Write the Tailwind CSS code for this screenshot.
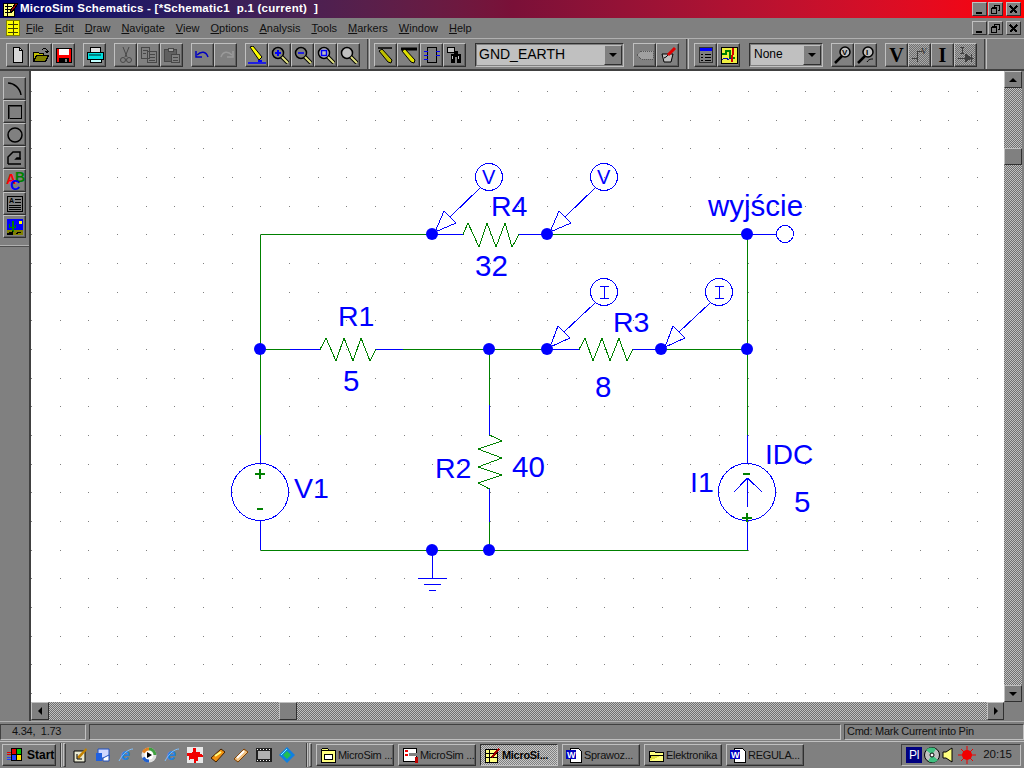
<!DOCTYPE html>
<html lang="en">
<head>
  <meta charset="UTF-8" />
  <title>MicroSim Schematics</title>
  <script src="https://cdn.jsdelivr.net/npm/@tailwindcss/browser@4"></script>
</head>
<body class="w-[1024px] h-[768px] overflow-hidden bg-[#808080] text-black text-[11px] leading-none font-['Liberation_Sans',Arial,sans-serif]">

  <!-- Title bar -->
  <div class="h-[18px] flex items-center bg-linear-to-r from-[#000070] via-[#7a1038] to-[#ff0000]">
    <svg class="ml-[2px] w-[16px] h-[16px]" viewBox="0 0 16 16" shape-rendering="crispEdges"><path d="M1 2h11v13H1z" fill="#ffff80" stroke="#000"/><path d="M3 5h7M3 8h7M3 11h7M5 2v13" stroke="#000"/><path d="M8 10l6-8 2 1-6 8z" fill="#a00000" stroke="#000"/></svg>
    <span class="ml-[2px] text-white font-bold text-[11.5px] tracking-[0.25px] whitespace-pre">MicroSim Schematics - [*Schematic1  p.1 (current)  ]</span>
    <div class="ml-auto mr-[3px] flex items-center [&>div]:w-[15px] [&>div]:h-[14px] [&>div]:bg-[#808080] [&>div]:border [&>div]:border-t-[#c0c0c0] [&>div]:border-l-[#c0c0c0] [&>div]:border-r-[#303030] [&>div]:border-b-[#303030] [&>div]:flex [&>div]:items-center [&>div]:justify-center">
      <div><svg class="w-[9px] h-[9px]" viewBox="0 0 9 9" shape-rendering="crispEdges"><path d="M1 7h6v2H1z"/></svg></div>
      <div class="ml-px"><svg class="w-[9px] h-[9px]" viewBox="0 0 9 9" shape-rendering="crispEdges"><path d="M3 .5h5.500v5H7M3 .5V2M.5 3.500h5v5h-5zM.5 2.500h5" fill="none" stroke="#000"/></svg></div>
      <div class="ml-[3px]"><svg class="w-[9px] h-[9px]" viewBox="0 0 9 9" shape-rendering="crispEdges"><path d="M1 1l7 7M8 1l-7 7" stroke="#000" stroke-width="1.500"/></svg></div>
    </div>
  </div>

  <!-- Menu bar -->
  <div class="h-[20px] flex items-center">
    <svg class="ml-[6px] w-[14px] h-[16px]" viewBox="0 0 14 16" shape-rendering="crispEdges"><path d="M.5 .5h13v15H.5z" fill="#ffff00" stroke="#808000"/><path d="M2 4h10M2 8h10M2 12h10M7 1v14" stroke="#404000"/></svg>
    <div class="ml-[6px] flex gap-[11px] text-[11px] text-[#101010] [&_u]:underline-offset-1">
      <span><u>F</u>ile</span><span><u>E</u>dit</span><span><u>D</u>raw</span><span><u>N</u>avigate</span><span><u>V</u>iew</span><span><u>O</u>ptions</span><span><u>A</u>nalysis</span><span><u>T</u>ools</span><span><u>M</u>arkers</span><span><u>W</u>indow</span><span><u>H</u>elp</span>
    </div>
    <div class="ml-auto mr-[3px] flex items-center [&>div]:w-[15px] [&>div]:h-[14px] [&>div]:bg-[#808080] [&>div]:border [&>div]:border-t-[#c0c0c0] [&>div]:border-l-[#c0c0c0] [&>div]:border-r-[#303030] [&>div]:border-b-[#303030] [&>div]:flex [&>div]:items-center [&>div]:justify-center">
      <div><svg class="w-[9px] h-[9px]" viewBox="0 0 9 9" shape-rendering="crispEdges"><path d="M1 7h6v2H1z"/></svg></div>
      <div class="ml-px"><svg class="w-[9px] h-[9px]" viewBox="0 0 9 9" shape-rendering="crispEdges"><path d="M3 .5h5.500v5H7M3 .5V2M.5 3.500h5v5h-5zM.5 2.500h5" fill="none" stroke="#000"/></svg></div>
      <div class="ml-[3px]"><svg class="w-[9px] h-[9px]" viewBox="0 0 9 9" shape-rendering="crispEdges"><path d="M1 1l7 7M8 1l-7 7" stroke="#000" stroke-width="1.500"/></svg></div>
    </div>
  </div>

  <!-- Main toolbar -->
  <div class="h-[33px] pt-[4px] flex items-start border-t border-t-[#b0b0b0] border-b-2 border-b-[#404040] [&_button]:w-[23px] [&_button]:h-[24px] [&_button]:flex [&_button]:items-center [&_button]:justify-center [&_button]:border [&_button]:border-t-[#c0c0c0] [&_button]:border-l-[#c0c0c0] [&_button]:border-r-[#303030] [&_button]:border-b-[#303030] [&_button]:shadow-[inset_-1px_-1px_0_#606060] [&_svg]:w-[18px] [&_svg]:h-[18px]">
    <div class="ml-[6px] flex">
      <button><svg viewBox="0 0 18 18" shape-rendering="crispEdges"><path d="M4.500 1.500h6l3 3v12h-9z" fill="#d8d8d8" stroke="#000"/><path d="M10.500 1.500v3h3" fill="none" stroke="#000"/></svg></button>
      <button><svg viewBox="0 0 18 18" shape-rendering="crispEdges"><path d="M1.500 6.500h5l1 1h4v3h-8l-2 5z" fill="#c0c000" stroke="#000"/><path d="M1.500 15.500l3-6h12l-3 6z" fill="#808000" stroke="#000"/><path d="M10 4c1-2 3-2 5 0v2M13 5h4l-2 2z" fill="none" stroke="#000"/></svg></button>
      <button><svg viewBox="0 0 18 18" shape-rendering="crispEdges"><path d="M1 2h16v15H1z" fill="#000"/><path d="M2 3h14v13H2z" fill="#ff0000"/><path d="M4 3h10v6H4z" fill="#fff"/><path d="M4 12h10v4H4z" fill="#000"/><path d="M10 13h2v3h-2z" fill="#808080"/></svg></button>
    </div>
    <div class="ml-2 flex">
      <button><svg viewBox="0 0 18 18" shape-rendering="crispEdges"><path d="M4 1h10v5H4z" fill="#e0e0e0" stroke="#000"/><path d="M1 6h16v7H1z" fill="#00e0e0" stroke="#000"/><path d="M3 8h12v2H3z" fill="#008080"/><path d="M4 13h11v3H4z" fill="#c0ffff" stroke="#000"/></svg></button>
    </div>
    <div class="ml-2 flex">
      <button><svg viewBox="0 0 18 18" fill="none" stroke="#484848"><path d="M6 1l4 10M12 1l-4 10"/><circle cx="6" cy="14" r="2.500"/><circle cx="12" cy="14" r="2.500"/></svg></button>
      <button><svg viewBox="0 0 18 18" fill="none" stroke="#484848" shape-rendering="crispEdges"><path d="M1.500 1.500h8v11h-8zM7.500 5.500h9v11h-9z" fill="#808080"/><path d="M3 4h5M3 7h3M9 8h6M9 11h6M9 14h6"/></svg></button>
      <button><svg viewBox="0 0 18 18" fill="none" stroke="#484848" shape-rendering="crispEdges"><path d="M1.500 3.500h12v12h-12z" fill="#606060"/><path d="M5 2h5v3H5z" fill="#a0a0a0"/><path d="M8.500 8.500h8v8h-8z" fill="#808080"/><path d="M10 11h5M10 14h5"/></svg></button>
    </div>
    <div class="ml-2 flex">
      <button><svg viewBox="0 0 18 18" fill="none" stroke="#0000c0" stroke-width="1.500"><path d="M3 9c4-4 9-4 11 2"/><path d="M2 5v6h6" fill="none"/></svg></button>
      <button><svg viewBox="0 0 18 18" fill="none" stroke="#9a9a9a" stroke-width="1.500"><path d="M15 9c-4-4-9-4-11 2"/><path d="M16 5v6h-6"/></svg></button>
    </div>
    <div class="ml-2 flex">
      <button><svg viewBox="0 0 18 18"><path d="M2 1l3-1 9 11-3 3z" fill="#ffff00" stroke="#000"/><path d="M10 14h4v2h-4z" fill="#0000ff"/><path d="M0 17h18" stroke="#0000ff" stroke-width="1.500"/></svg></button>
      <button><svg viewBox="0 0 18 18" fill="none"><circle cx="7" cy="7" r="5.500" stroke="#000" stroke-width="1.500"/><path d="M4 7h6M7 4v6" stroke="#0000ff" stroke-width="2"/><path d="M11 11l6 6" stroke="#000" stroke-width="4"/><path d="M11 11l6 6" stroke="#e0e080" stroke-width="2"/></svg></button>
      <button><svg viewBox="0 0 18 18" fill="none"><circle cx="7" cy="7" r="5.500" stroke="#000" stroke-width="1.500"/><path d="M4 7h6" stroke="#0000ff" stroke-width="1.500"/><path d="M11 11l6 6" stroke="#000" stroke-width="4"/><path d="M11 11l6 6" stroke="#e0e080" stroke-width="2"/></svg></button>
      <button><svg viewBox="0 0 18 18" fill="none"><circle cx="7" cy="7" r="5.500" fill="#c0c0c0" stroke="#000" stroke-width="1.500"/><path d="M4.500 4.500h5v5h-5z" stroke="#0000ff" stroke-width="1.500"/><path d="M11 11l6 6" stroke="#000" stroke-width="4"/><path d="M11 11l6 6" stroke="#e0e080" stroke-width="2"/></svg></button>
      <button><svg viewBox="0 0 18 18" fill="none"><circle cx="7" cy="7" r="5.500" fill="#c0c0c0" stroke="#000" stroke-width="1.500"/><path d="M11 11l6 6" stroke="#000" stroke-width="4"/><path d="M11 11l6 6" stroke="#e0e080" stroke-width="2"/></svg></button>
    </div>
    <div class="ml-[7px] mr-[4px] -mt-[4px] w-[3px] h-[30px] border-l border-l-[#404040] border-r border-r-[#c0c0c0]"></div>
    <div class="flex">
      <button><svg viewBox="0 0 18 18"><path d="M1 2h14" stroke="#000" stroke-width="1.500"/><path d="M2 5l3-2 10 11-1 3-3-1z" fill="#c0c000" stroke="#000"/></svg></button>
      <button><svg viewBox="0 0 18 18"><path d="M1 3h16" stroke="#000" stroke-width="3"/><path d="M2 5l3-2 10 11-1 3-3-1z" fill="#e0e000" stroke="#000"/></svg></button>
      <button><svg viewBox="0 0 18 18" shape-rendering="crispEdges"><path d="M4.500 1.500h9v15h-9z" fill="#808080" stroke="#000"/><path d="M1 5h4M1 9h4M1 13h4M13 5h4M13 9h4" stroke="#0000ff"/></svg></button>
      <button><svg viewBox="0 0 18 18" shape-rendering="crispEdges"><path d="M1.500 1.500h7v5h-7z" fill="#c0c0c0" stroke="#000"/><path d="M5 8h4v9H5zM11 8h4v9h-4zM8 5h4v6H8z" fill="#000"/><path d="M6 10h1v3H6zM12 10h1v3h-1z" fill="#c0c0c0"/></svg></button>
    </div>
    <div class="ml-[9px] w-[149px] h-[24px] flex border border-t-[#303030] border-l-[#303030] border-r-[#c0c0c0] border-b-[#c0c0c0] p-px">
      <span class="flex-1 bg-[#c0c0c0] pl-[2px] text-[14px] leading-[19px]">GND_EARTH</span>
      <div class="w-[18px] flex items-center justify-center border border-t-[#c0c0c0] border-l-[#c0c0c0] border-r-[#303030] border-b-[#303030]"><span class="w-0 h-0 border-x-[4px] border-x-transparent border-t-[4px] border-t-black"></span></div>
    </div>
    <div class="ml-[9px] flex">
      <button><svg viewBox="0 0 18 18" shape-rendering="crispEdges"><path d="M5 5h12v8H5L1 9z" fill="#a0a0a0" stroke="#585858" stroke-dasharray="1 1"/></svg></button>
      <button><svg viewBox="0 0 18 18"><path d="M3 8h11l-2 8H5z" fill="#c0c0c0" stroke="#000"/><path d="M5 12c3-1 4-3 5-5" stroke="#000" fill="none"/><path d="M9 9l7-7" stroke="#e00000" stroke-width="3"/></svg></button>
    </div>
    <div class="ml-[7px] mr-[5px] -mt-[4px] w-[3px] h-[30px] border-l border-l-[#404040] border-r border-r-[#c0c0c0]"></div>
    <div class="flex">
      <button><svg viewBox="0 0 18 18" shape-rendering="crispEdges"><path d="M2 1h14v16H2z" fill="#303030"/><path d="M3 2h12v3H3z" fill="#0000ff"/><path d="M3 5h12v11H3z" fill="#808080"/><path d="M4 8h2M8 8h6M4 11h2M8 11h6M4 14h2M8 14h6" stroke="#000"/></svg></button>
      <button><svg viewBox="0 0 18 18" shape-rendering="crispEdges"><path d="M1 1h16v16H1z" fill="#f0f040" stroke="#000"/><path d="M2 8h4v-3h4v7h5" fill="none" stroke="#008000" stroke-width="1.500"/><path d="M2 14c4-5 6 3 10-3" fill="none" stroke="#0000c0"/><path d="M13 2l-1 14" stroke="#d00000" stroke-width="2"/></svg></button>
    </div>
    <div class="ml-[9px] w-[74px] h-[24px] flex border border-t-[#303030] border-l-[#303030] border-r-[#c0c0c0] border-b-[#c0c0c0] p-px">
      <span class="flex-1 bg-[#c0c0c0] pl-[3px] text-[12px] leading-[19px]">None</span>
      <div class="w-[18px] flex items-center justify-center border border-t-[#c0c0c0] border-l-[#c0c0c0] border-r-[#303030] border-b-[#303030]"><span class="w-0 h-0 border-x-[4px] border-x-transparent border-t-[4px] border-t-black"></span></div>
    </div>
    <div class="ml-2 flex">
      <button><svg viewBox="0 0 18 18" fill="none"><circle cx="11" cy="6" r="5" fill="#c0c0c0" stroke="#000" stroke-width="1.500"/><text x="8" y="9" class="text-[8px] font-bold" fill="#000" stroke="none">V</text><path d="M1 17l7-7" stroke="#000" stroke-width="2.500"/></svg></button>
      <button><svg viewBox="0 0 18 18" fill="none"><circle cx="11" cy="6" r="5" fill="#c0c0c0" stroke="#000" stroke-width="1.500"/><text x="9" y="9" class="text-[8px] font-bold" fill="#000" stroke="none">I</text><path d="M1 17l7-7" stroke="#000" stroke-width="2.500"/><path d="M10 16c2-3 4-3 6-3" stroke="#000"/></svg></button>
    </div>
    <div class="ml-2 flex font-['Liberation_Serif',serif] font-bold text-[20px]">
      <button>V</button>
      <button class="bg-[repeating-conic-gradient(#a8a8a8_0_25%,#707070_0_50%)] bg-[length:2px_2px]"><svg viewBox="0 0 18 18" shape-rendering="crispEdges"><path d="M1 12h5v-7h5M6 12v4" fill="none" stroke="#404040"/><text x="10" y="8" class="text-[8px]" fill="#404040">V</text></svg></button>
      <button>I</button>
      <button class="bg-[repeating-conic-gradient(#a8a8a8_0_25%,#707070_0_50%)] bg-[length:2px_2px]"><svg viewBox="0 0 18 18" shape-rendering="crispEdges"><path d="M1 12h16M8 8v8l6-4zM14 8v8" fill="#404040" stroke="#404040"/><path d="M3 1h4M5 1v6M3 7h4" stroke="#404040"/></svg></button>
    </div>
    <div class="ml-[7px] -mt-[4px] w-[3px] h-[30px] border-l border-l-[#404040] border-r border-r-[#c0c0c0]"></div>
  </div>

  <!-- Work area -->
  <div class="h-[650px] flex">
    <!-- Drawing toolbar -->
    <div class="w-[31px] border-r-2 border-r-[#404040] pl-[3px] pt-[6px] flex flex-col [&_button]:w-[23px] [&_button]:h-[23px] [&_button]:flex [&_button]:items-center [&_button]:justify-center [&_button]:border [&_button]:border-t-[#c0c0c0] [&_button]:border-l-[#c0c0c0] [&_button]:border-r-[#303030] [&_button]:border-b-[#303030] [&_button]:shadow-[inset_-1px_-1px_0_#606060] [&_svg]:w-[18px] [&_svg]:h-[18px] [&_svg]:overflow-visible">
      <button><svg viewBox="0 0 18 18" fill="none"><path d="M2 3c6 0 12 5 13 12" stroke="#000" stroke-width="1.500"/></svg></button>
      <button><svg viewBox="0 0 18 18" shape-rendering="crispEdges"><path d="M2.500 2.500h13v13h-13z" fill="none" stroke="#000"/><path d="M3.500 15.500v-12h11" fill="none" stroke="#404040"/></svg></button>
      <button><svg viewBox="0 0 18 18"><circle cx="9" cy="9" r="7" fill="none" stroke="#000" stroke-width="1.500"/></svg></button>
      <button><svg viewBox="0 0 18 18" fill="none"><path d="M2 15V8l5-5h7v6h-3l-1 1 5 0M2 15h13" stroke="#000" stroke-width="1.500"/></svg></button>
      <button><svg viewBox="0 0 18 18" class="font-bold text-[14px]"><text x="0" y="12" fill="#ff0000">A</text><text x="9" y="10" fill="#008000">B</text><text x="4" y="18" fill="#0000ff">C</text></svg></button>
      <button><svg viewBox="0 0 18 18" shape-rendering="crispEdges"><path d="M1.500 1.500h15v15h-15z" fill="none" stroke="#000"/><text x="3" y="8" class="text-[7px] font-bold">A</text><path d="M9 4h6M9 7h6M3 10h12M3 12h12M3 14h12" stroke="#000"/></svg></button>
      <button><svg viewBox="0 0 18 18" shape-rendering="crispEdges"><path d="M1 1h16v11H1z" fill="#0000ff"/><path d="M1 12h16v5H1z" fill="#808000"/><path d="M13 3h3v3h-3z" fill="#ffff00"/><path d="M6 3h2v11H6zM3 6h1v3h2v1H3zM9 7h1v3H8V9h1z" fill="#008000"/><path d="M1 16l5-2v2zM11 14h4M10 15h2" stroke="#000"/></svg></button>
      <div class="-ml-[3px] mt-[7px] w-[29px] h-[2px] border-t border-t-[#b0b0b0] border-b border-b-[#505050]"></div>
    </div>

    <div class="w-[993px] flex flex-col">
      <div class="h-[631px] flex">
        <!-- Schematic sheet -->
        <svg id="sheet" class="w-[973px] h-[631px] bg-white" viewBox="31 71 973 631" shape-rendering="crispEdges" fill="none">
          <path id="grid" stroke="#808080"></path>

          <!-- wires -->
          <path stroke="#008000" d="M260.500 234.500V435M260.500 234.500H432M547 234.500H747M747.500 234.500V435M260 349.500H290M403 349.500H547M661 349.500H747M489.500 349.500V405M489.500 522V550M260.500 550.500H747.500"/>
          <path stroke="#0000ff" d="M432 234.500H463M519 234.500H547M747 234.500H777M290 349.500H320M376 349.500H403M547 349.500H579M633 349.500H661M260.500 435V463M260.500 521V550M489.500 405V435M489.500 489V522M747.500 435V463M747.500 521V550M432.500 550V578M418 578.500H447M424 584.500H441M429 590.500H436"/>

          <!-- resistors -->
          <path stroke="#008000" d="M463 234.500L468 223L479 247L487 223L496 247L505 223L512 247L519 234.500"/>
          <path stroke="#008000" d="M320 349.500L326 338L336 361L344 338L353 361L361 338L370 361L376 349.500"/>
          <path stroke="#008000" d="M579 349.500L585 338L593 361L602 338L610 361L619 338L627 361L633 349.500"/>
          <path stroke="#008000" d="M489.500 435L502 441L478 449L502 458L478 467L502 475L478 483L489.500 489"/>

          <!-- sources -->
          <circle cx="260" cy="492" r="28.500" stroke="#0000ff"/>
          <path stroke="#008000" stroke-width="2" d="M255 474H265M260 469V479M257 509H263"/>
          <circle cx="747" cy="492" r="28.500" stroke="#0000ff"/>
          <path stroke="#0000ff" d="M747.500 478V507M747.500 478L734 492M747.500 478L762 492"/>
          <path stroke="#008000" stroke-width="2" d="M743 474H750M742 518H752M747 513V522"/>

          <!-- output pin -->
          <circle cx="785" cy="234" r="8.500" stroke="#0000ff"/>

          <!-- nodes -->
          <g fill="#0000ff" shape-rendering="auto">
            <circle cx="432" cy="234" r="6"/><circle cx="547" cy="234" r="6"/><circle cx="747" cy="234" r="6"/>
            <circle cx="260" cy="349" r="6"/><circle cx="489" cy="349" r="6"/><circle cx="547" cy="349" r="6"/><circle cx="661" cy="349" r="6"/><circle cx="747" cy="349" r="6"/>
            <circle cx="432" cy="550" r="6"/><circle cx="489" cy="550" r="6"/>
          </g>

          <!-- probes -->
          <g stroke="#0000ff">
            <circle cx="489" cy="177" r="13.500"/><path d="M480 188L450 217M444 211L456 223L435 232z"/>
            <circle cx="604" cy="177" r="13.500"/><path d="M595 188L565 217M559 211L571 223L550 232z"/>
            <circle cx="604" cy="292" r="13.500"/><path d="M595 303L564 332M558 326L570 338L550 347zM600 286.500H609M604.500 286.500V298M600 298.500H609"/>
            <circle cx="719" cy="292" r="13.500"/><path d="M710 303L679 332M673 326L685 338L665 347zM715 286.500H724M719.500 286.500V298M715 298.500H724"/>
          </g>

          <!-- labels -->
          <g fill="#0000ff" class="text-[28.5px]" shape-rendering="auto">
            <text x="491" y="216">R4</text>
            <text x="475" y="276" class="text-[29.5px]">32</text>
            <text x="708" y="216" class="text-[29.5px]">wyjście</text>
            <text x="338" y="326">R1</text>
            <text x="343" y="391" class="text-[29.5px]">5</text>
            <text x="613" y="332">R3</text>
            <text x="595" y="397" class="text-[29.5px]">8</text>
            <text x="435" y="478">R2</text>
            <text x="512" y="477" class="text-[29.5px]">40</text>
            <text x="294" y="498">V1</text>
            <text x="690" y="492">I1</text>
            <text x="765" y="464" class="text-[28px]">IDC</text>
            <text x="794" y="512" class="text-[29.5px]">5</text>
            <text x="482" y="184" class="text-[20px]">V</text>
            <text x="597" y="184" class="text-[20px]">V</text>
          </g>
        </svg>

        <!-- Vertical scrollbar -->
        <div class="w-[18px] flex flex-col bg-[repeating-conic-gradient(#c0c0c0_0_25%,#707070_0_50%)] bg-[length:2px_2px]">
          <div class="h-[17px] bg-[#808080] flex items-center justify-center border border-t-[#c0c0c0] border-l-[#c0c0c0] border-r-[#303030] border-b-[#303030]"><span class="w-0 h-0 border-x-[4px] border-x-transparent border-b-[4px] border-b-black"></span></div>
          <div class="mt-[60px] h-[17px] bg-[#808080] border border-t-[#c0c0c0] border-l-[#c0c0c0] border-r-[#303030] border-b-[#303030]"></div>
          <div class="mt-auto h-[17px] bg-[#808080] flex items-center justify-center border border-t-[#c0c0c0] border-l-[#c0c0c0] border-r-[#303030] border-b-[#303030]"><span class="w-0 h-0 border-x-[4px] border-x-transparent border-t-[4px] border-t-black"></span></div>
        </div>
      </div>

      <!-- Horizontal scrollbar -->
      <div class="w-[973px] h-[18px] flex bg-[repeating-conic-gradient(#c0c0c0_0_25%,#707070_0_50%)] bg-[length:2px_2px]">
        <div class="w-[18px] bg-[#808080] flex items-center justify-center border border-t-[#c0c0c0] border-l-[#c0c0c0] border-r-[#303030] border-b-[#303030]"><span class="w-0 h-0 border-y-[4px] border-y-transparent border-r-[4px] border-r-black"></span></div>
        <div class="ml-[230px] w-[18px] bg-[#808080] border border-t-[#c0c0c0] border-l-[#c0c0c0] border-r-[#303030] border-b-[#303030]"></div>
        <div class="ml-auto w-[17px] bg-[#808080] flex items-center justify-center border border-t-[#c0c0c0] border-l-[#c0c0c0] border-r-[#303030] border-b-[#303030]"><span class="w-0 h-0 border-y-[4px] border-y-transparent border-l-[4px] border-l-black"></span></div>
      </div>
    </div>
  </div>

  <!-- Status bar -->
  <div class="h-[20px] flex items-center gap-[3px] border-t border-t-[#b0b0b0] text-[11px] tracking-[-0.25px] text-[#101010] [&>div]:h-[16px] [&>div]:flex [&>div]:items-center [&>div]:border [&>div]:border-t-[#404040] [&>div]:border-l-[#404040] [&>div]:border-r-[#c0c0c0] [&>div]:border-b-[#c0c0c0]">
    <div class="w-[86px] pl-[11px]">4.34,&nbsp; 1.73</div>
    <div class="w-[752px]"></div>
    <div class="flex-1 pl-[2px]">Cmd: Mark Current into Pin</div>
  </div>

  <!-- Taskbar -->
  <div class="h-[27px] pt-[2px] flex items-start border-t border-t-[#c0c0c0] text-[11px] tracking-[-0.3px] text-[#101010] [&_button]:h-[22px] [&_button]:flex [&_button]:items-center [&_button]:border [&_button]:border-t-[#c0c0c0] [&_button]:border-l-[#c0c0c0] [&_button]:border-r-[#303030] [&_button]:border-b-[#303030] [&_button]:shadow-[inset_-1px_-1px_0_#606060]">
    <button class="ml-[2px] w-[54px] pl-[4px] gap-[4px] font-bold text-[12px] tracking-normal text-black">
      <svg class="w-[16px] h-[16px]" viewBox="0 0 16 16" shape-rendering="crispEdges"><path d="M4 1h11v13H4z" fill="#000"/><path d="M5 2h4v5H5z" fill="#e00000"/><path d="M10 2h4v5h-4z" fill="#00c000"/><path d="M5 8h4v5H5z" fill="#2040ff"/><path d="M10 8h4v5h-4z" fill="#ffe000"/><path d="M0 5h4M0 7h4" stroke="#e00000"/><path d="M0 10h4M0 12h4" stroke="#2040ff"/></svg>
      Start
    </button>
    <div class="ml-[4px] -mt-px w-[2px] h-[24px] border-l border-l-[#404040] border-r border-r-[#c0c0c0]"></div>
    <div class="ml-px -mt-px w-[3px] h-[24px] border border-t-[#c0c0c0] border-l-[#c0c0c0] border-r-[#404040] border-b-[#404040]"></div>

    <!-- quick launch -->
    <div class="ml-[6px] w-[230px] h-[22px] flex items-center gap-[7px] [&_svg]:w-[16px] [&_svg]:h-[16px] [&_svg]:shrink-0">
      <svg viewBox="0 0 16 16"><path d="M2 4h11v11H2z" fill="#e8e8d0" stroke="#000"/><path d="M5 10l9-9 1 2-8 9z" fill="#c08000"/><path d="M5 7v5h5" fill="none" stroke="#000"/></svg>
      <svg viewBox="0 0 16 16"><path d="M3 2h11v9H3z" fill="#d0d8ff" stroke="#2050c0"/><path d="M1 6h6v8H1z" fill="#2060e0"/><path d="M8 11l6-3v6H8z" fill="#fff" stroke="#2050c0"/></svg>
      <svg viewBox="0 0 16 16" class="font-bold italic text-[16px]"><text x="3" y="13" fill="#2080e0">e</text><path d="M1 14C5 6 11 2 15 2" fill="none" stroke="#80c0ff"/></svg>
      <svg viewBox="0 0 16 16"><circle cx="8" cy="8" r="7.500" fill="#e0e0e0"/><path d="M8 .5A7.500 7.500 0 0 1 15.500 8H8z" fill="#40a040"/><path d="M8 .5A7.500 7.500 0 0 0 1 5l7 3z" fill="#e08020"/><path d="M1 11A7.500 7.500 0 0 0 8 15.500V8z" fill="#2060d0"/><circle cx="8" cy="8" r="4.500" fill="#fff"/><path d="M6 5l5 3-5 3z" fill="#000"/></svg>
      <svg viewBox="0 0 16 16" class="font-bold italic text-[16px]"><text x="3" y="13" fill="#2080e0">e</text><path d="M1 14C5 6 11 2 15 2" fill="none" stroke="#80c0ff"/></svg>
      <svg viewBox="0 0 16 16" shape-rendering="crispEdges"><path d="M0 0h16v16H0z" fill="#e8e8e8"/><path d="M6 1h3v4h4v2l3 1v2h-5v4H9v2H7v-4H4l-2 1V9H0V6h4l2-1z" fill="#f00000"/></svg>
      <svg viewBox="0 0 16 16"><path d="M1 11L11 2l4 3-9 10z" fill="#f09010" stroke="#402000"/><path d="M5 9l6-4" stroke="#ffff80" stroke-width="2"/></svg>
      <svg viewBox="0 0 16 16"><path d="M1 12L11 2l4 3-10 10z" fill="#f0c080" stroke="#804000"/><path d="M4 11l7-7" stroke="#fff" stroke-width="2"/></svg>
      <svg viewBox="0 0 16 16" shape-rendering="crispEdges"><path d="M0 1h16v14H0z" fill="#202020"/><path d="M2 4h12v8H2z" fill="#b0b0b0"/><path d="M1 2h1v1H1zM4 2h1v1H4zM7 2h1v1H7zM10 2h1v1h-1zM13 2h1v1h-1zM1 13h1v1H1zM4 13h1v1H4zM7 13h1v1H7zM10 13h1v1h-1zM13 13h1v1h-1z" fill="#fff"/></svg>
      <svg viewBox="0 0 16 16"><path d="M8 0l8 8-8 8-8-8z" fill="#1080e0"/><path d="M8 4l4 4-4 4-4-4z" fill="#20c050"/><path d="M2 8l6-6" stroke="#80ffff"/></svg>
    </div>
    <div class="ml-[4px] -mt-px w-[2px] h-[24px] border-l border-l-[#404040] border-r border-r-[#c0c0c0]"></div>
    <div class="ml-px -mt-px w-[3px] h-[24px] border border-t-[#c0c0c0] border-l-[#c0c0c0] border-r-[#404040] border-b-[#404040]"></div>

    <!-- running tasks -->
    <div class="ml-[4px] flex gap-[4px] [&_button]:w-[78px] [&_button]:pl-[3px] [&_button]:gap-[2px] [&_button]:whitespace-nowrap [&_svg]:w-[16px] [&_svg]:h-[16px] [&_svg]:shrink-0">
      <button><svg viewBox="0 0 16 16" shape-rendering="crispEdges"><path d="M1 3h14v12H1z" fill="#ffff80" stroke="#000"/><path d="M1 3l2-2h4l2 2" fill="#ffff80" stroke="#000"/><path d="M4 7h8v5H4z" fill="#fff" stroke="#000"/></svg>MicroSim ...</button>
      <button><svg viewBox="0 0 16 16" shape-rendering="crispEdges"><path d="M1 1h13v13H1z" fill="#fff" stroke="#000"/><path d="M3 3h3v2H3zM3 7h3v2H3z" fill="#f00000"/><path d="M7 6h8v3H7z" fill="#808080"/><path d="M13 10h3v6h-3z" fill="#c00000"/></svg>MicroSim ...</button>
      <button class="font-bold bg-[repeating-conic-gradient(#c8c8c8_0_25%,#808080_0_50%)] bg-[length:2px_2px] border-t-[#303030]! border-l-[#303030]! border-r-[#c0c0c0]! border-b-[#c0c0c0]! shadow-none! text-black"><svg viewBox="0 0 16 16" shape-rendering="crispEdges"><path d="M1 2h12v13H1z" fill="#ffff80" stroke="#000"/><path d="M1 6h12M1 10h12M5 2v13" stroke="#000"/><path d="M7 10l7-9 2 1-7 9z" fill="#a00000"/></svg>MicroSi...</button>
      <button><svg viewBox="0 0 16 16" shape-rendering="crispEdges"><path d="M4 1h8l3 3v11H4z" fill="#fff" stroke="#000"/><path d="M0 3h10v9H0z" fill="#0000c0"/><text x="1" y="11" class="text-[9px] font-bold" fill="#fff">W</text></svg>Sprawoz...</button>
      <button><svg viewBox="0 0 16 16" shape-rendering="crispEdges"><path d="M1 4h5l1 1h8v9H1z" fill="#ffff80" stroke="#000"/><path d="M1 14l2-6h12" fill="#e0e040" stroke="#000"/></svg>Elektronika</button>
      <button><svg viewBox="0 0 16 16" shape-rendering="crispEdges"><path d="M4 1h8l3 3v11H4z" fill="#fff" stroke="#000"/><path d="M0 3h10v9H0z" fill="#0000c0"/><text x="1" y="11" class="text-[9px] font-bold" fill="#fff">W</text></svg>REGULA...</button>
    </div>

    <!-- tray -->
    <div class="ml-auto mr-[3px] w-[120px] h-[22px] flex items-center pl-[4px] border border-t-[#404040] border-l-[#404040] border-r-[#c0c0c0] border-b-[#c0c0c0]">
      <span class="w-[16px] h-[16px] bg-[#000080] text-white text-[12px] leading-[16px] text-center">Pl</span>
      <svg class="ml-[2px] w-[16px] h-[16px]" viewBox="0 0 16 16"><circle cx="8" cy="8" r="7.500" fill="#c0c0c0" stroke="#000"/><path d="M8 8L2 3A7.500 7.500 0 0 1 12 2zM8 8l6 5a7.500 7.500 0 0 1-10 1z" fill="#40c080"/><circle cx="8" cy="8" r="2" fill="#fff" stroke="#000"/></svg>
      <svg class="ml-[2px] w-[11px] h-[16px]" viewBox="0 0 11 16"><path d="M1 5h3l6-4v14l-6-4H1z" fill="#ffff80" stroke="#000"/></svg>
      <svg class="ml-[5px] w-[18px] h-[18px]" viewBox="0 0 18 18"><circle cx="9" cy="9" r="5" fill="#f00000"/><path d="M9 0v18M0 9h18M3 3l12 12M15 3L3 15" stroke="#f00000"/></svg>
      <span class="ml-auto mr-[8px] text-[11.5px] tracking-normal">20:15</span>
    </div>
  </div>

  <script>
    // background grid of the sheet
    let d = "";
    for (let x = 31; x < 1004; x += 28.67) {
      for (let y = 91; y < 702; y += 28.67) {
        d += "M" + Math.round(x) + " " + (Math.round(y) + 0.5) + "h1";
      }
    }
    document.getElementById("grid").setAttribute("d", d);
  </script>
</body>
</html>
